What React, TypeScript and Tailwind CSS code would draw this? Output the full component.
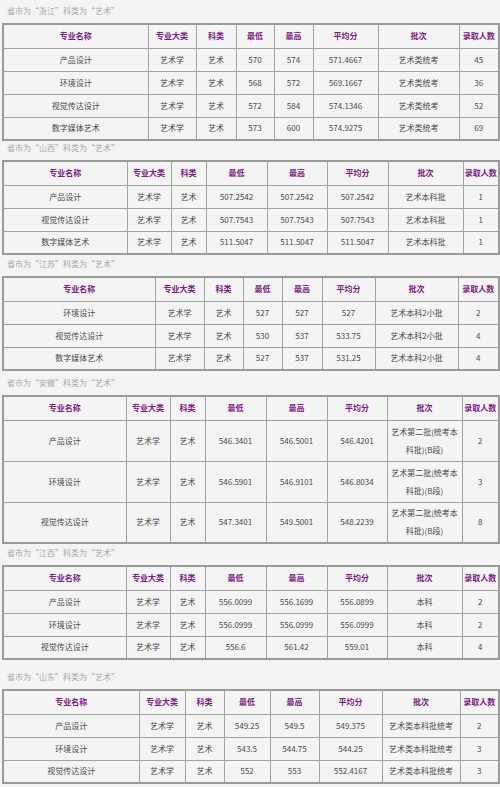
import React from "react";

type Row = string[];
type Section = {
  prov: string;
  cols: string[];
  rows: Row[];
  captionCls: string;
  tall?: boolean;
};

const headers = ["专业名称", "专业大类", "科类", "最低", "最高", "平均分", "批次", "录取人数"];

const sections: Section[] = [
  {
    prov: "浙江",
    captionCls: "h-[23px]",
    cols: ["w-[145px]", "w-[48px]", "w-[40px]", "w-[38px]", "w-[39px]", "w-[65px]", "w-[81px]", "w-[40px]"],
    rows: [
      ["产品设计", "艺术学", "艺术", "570", "574", "571.4667", "艺术类统考", "45"],
      ["环境设计", "艺术学", "艺术", "568", "572", "569.1667", "艺术类统考", "36"],
      ["视觉传达设计", "艺术学", "艺术", "572", "584", "574.1346", "艺术类统考", "52"],
      ["数字媒体艺术", "艺术学", "艺术", "573", "600", "574.9275", "艺术类统考", "69"],
    ],
  },
  {
    prov: "山西",
    captionCls: "h-[19px]",
    cols: ["w-[124px]", "w-[44px]", "w-[35px]", "w-[61px]", "w-[60px]", "w-[61px]", "w-[75px]", "w-[36px]"],
    rows: [
      ["产品设计", "艺术学", "艺术", "507.2542", "507.2542", "507.2542", "艺术本科批", "1"],
      ["视觉传达设计", "艺术学", "艺术", "507.7543", "507.7543", "507.7543", "艺术本科批", "1"],
      ["数字媒体艺术", "艺术学", "艺术", "511.5047", "511.5047", "511.5047", "艺术本科批", "1"],
    ],
  },
  {
    prov: "江苏",
    captionCls: "h-[21px]",
    cols: ["w-[152px]", "w-[49px]", "w-[39px]", "w-[39px]", "w-[40px]", "w-[53px]", "w-[83px]", "w-[41px]"],
    rows: [
      ["环境设计", "艺术学", "艺术", "527", "527", "527", "艺术本科2小批", "2"],
      ["视觉传达设计", "艺术学", "艺术", "530", "537", "533.75", "艺术本科2小批", "4"],
      ["数字媒体艺术", "艺术学", "艺术", "527", "537", "531.25", "艺术本科2小批", "4"],
    ],
  },
  {
    prov: "安徽",
    captionCls: "h-[24px]",
    tall: true,
    cols: ["w-[123px]", "w-[44px]", "w-[35px]", "w-[61px]", "w-[61px]", "w-[60px]", "w-[75px]", "w-[37px]"],
    rows: [
      ["产品设计", "艺术学", "艺术", "546.3401", "546.5001", "546.4201", "B", "2"],
      ["环境设计", "艺术学", "艺术", "546.5901", "546.9101", "546.8034", "B", "3"],
      ["视觉传达设计", "艺术学", "艺术", "547.3401", "549.5001", "548.2239", "B", "8"],
    ],
  },
  {
    prov: "江西",
    captionCls: "h-[21px]",
    cols: ["w-[123px]", "w-[44px]", "w-[35px]", "w-[61px]", "w-[61px]", "w-[60px]", "w-[75px]", "w-[37px]"],
    rows: [
      ["产品设计", "艺术学", "艺术", "556.0099", "556.1699", "556.0899", "本科", "2"],
      ["环境设计", "艺术学", "艺术", "556.0999", "556.0999", "556.0999", "本科", "2"],
      ["视觉传达设计", "艺术学", "艺术", "556.6", "561.42", "559.01", "本科", "4"],
    ],
  },
  {
    prov: "山东",
    captionCls: "h-[29px]",
    cols: ["w-[136px]", "w-[46px]", "w-[39px]", "w-[46px]", "w-[49px]", "w-[63px]", "w-[78px]", "w-[39px]"],
    rows: [
      ["产品设计", "艺术学", "艺术", "549.25", "549.5", "549.375", "艺术类本科批统考", "2"],
      ["环境设计", "艺术学", "艺术", "543.5", "544.75", "544.25", "艺术类本科批统考", "3"],
      ["视觉传达设计", "艺术学", "艺术", "552", "553", "552.4167", "艺术类本科批统考", "3"],
    ],
  },
];

function Cell({ children, tall }: { children: React.ReactNode; tall?: boolean }) {
  return (
    <td
      className={
        "border border-[#a3a3a3] text-center align-middle px-0 py-0 text-[#4a4a4a] " +
        (tall ? "h-[41px]" : "h-[23px] whitespace-nowrap")
      }
    >
      {children}
    </td>
  );
}

function Table({ s }: { s: Section }) {
  return (
    <table className="w-[496px] ml-[2px] table-fixed border-collapse border-2 border-[#9a9a9a] text-[8px] leading-[18px]">
      <colgroup>
        {s.cols.map((w, i) => (
          <col key={i} className={w} />
        ))}
      </colgroup>
      <tbody>
        <tr>
          {headers.map((h) => (
            <td
              key={h}
              className="border border-[#a3a3a3] text-center align-middle px-0 py-0 h-[24px] whitespace-nowrap font-bold text-[#7b2082]"
            >
              {h}
            </td>
          ))}
        </tr>
        {s.rows.map((r, i) => (
          <tr key={i}>
            {r.map((c, j) => (
              <Cell key={j} tall={s.tall}>
                {c === "B" ? (
                  <>
                    艺术第二批(统考本
                    <br />
                    科批)(B段)
                  </>
                ) : (
                  c
                )}
              </Cell>
            ))}
          </tr>
        ))}
      </tbody>
    </table>
  );
}

export default function App() {
  return (
    <div className="w-[500px] h-[787px] overflow-hidden bg-[#f4f4f4] font-['Noto_Sans_CJK_SC','Open_Sans',sans-serif]">
      {sections.map((s) => (
        <div key={s.prov}>
          <div
            className={
              "flex items-end pl-[7px] pb-[6px] text-[8px] leading-[12px] text-[#a8a8a8] " + s.captionCls
            }
          >
            省市为“{s.prov}”科类为“艺术”
          </div>
          <Table s={s} />
        </div>
      ))}
    </div>
  );
}
